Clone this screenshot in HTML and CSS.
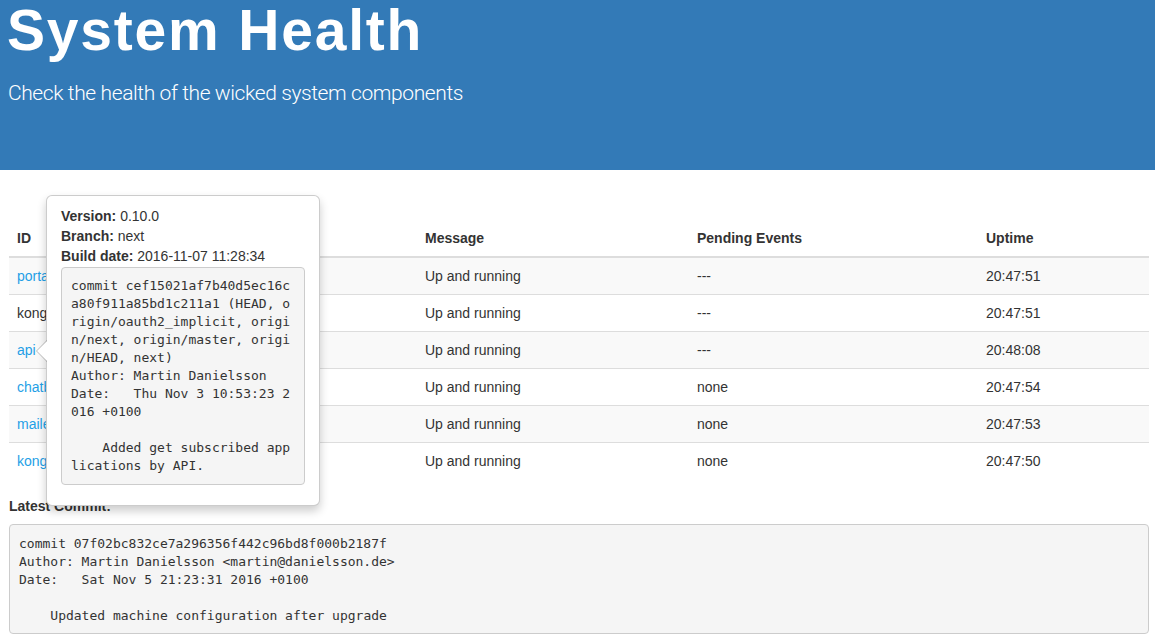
FILE: index.html
```html
<!DOCTYPE html>
<html lang="en">
<head>
<meta charset="utf-8">
<title>System Health</title>
<link rel="stylesheet" href="styles.css">
</head>
<body>
<header class="jumbotron">
  <h1 class="title">System Health</h1>
  <p class="lead">Check the health of the wicked system components</p>
</header>
<main class="container">
  <table class="table">
    <colgroup>
      <col class="c-id"><col class="c-msg"><col class="c-pend"><col class="c-up">
    </colgroup>
    <thead>
      <tr><th>ID</th><th>Message</th><th>Pending Events</th><th>Uptime</th></tr>
    </thead>
    <tbody>
      <tr><td><a class="lnk" href="#">portal</a></td><td>Up and running</td><td>---</td><td>20:47:51</td></tr>
      <tr><td>kong</td><td>Up and running</td><td>---</td><td>20:47:51</td></tr>
      <tr><td><a class="lnk" href="#">api</a></td><td>Up and running</td><td>---</td><td>20:48:08</td></tr>
      <tr><td><a class="lnk" href="#">chatbot</a></td><td>Up and running</td><td>none</td><td>20:47:54</td></tr>
      <tr><td><a class="lnk" href="#">mailer</a></td><td>Up and running</td><td>none</td><td>20:47:53</td></tr>
      <tr><td><a class="lnk" href="#">kong-adapter</a></td><td>Up and running</td><td>none</td><td>20:47:50</td></tr>
    </tbody>
  </table>
  <div class="label">Latest Commit:</div>
  <pre class="code main-code">commit 07f02bc832ce7a296356f442c96bd8f000b2187f
Author: Martin Danielsson &lt;martin@danielsson.de&gt;
Date:   Sat Nov 5 21:23:31 2016 +0100

    Updated machine configuration after upgrade</pre>

  <div class="popover">
    <div class="arrow"></div>
    <div class="popover-content">
      <div><b>Version:</b> 0.10.0</div>
      <div><b>Branch:</b> next</div>
      <div><b>Build date:</b> 2016-11-07 11:28:34</div>
      <pre class="code pop-code">commit cef15021af7b40d5ec16ca80f911a85bd1c211a1 (HEAD, origin/oauth2_implicit, origin/next, origin/master, origin/HEAD, next)
Author: Martin Danielsson
Date:   Thu Nov 3 10:53:23 2016 +0100

    Added get subscribed applications by API.</pre>
    </div>
  </div>
</main>
</body>
</html>
```

FILE: styles.css
```css
html, body {
  margin: 0;
  padding: 0;
  background: #fff;
}
body {
  font-family: "Liberation Sans", Arial, sans-serif;
  font-size: 14px;
  line-height: 20px;
  color: #333;
}
.jumbotron {
  background: #337ab7;
  color: #fff;
  height: 170px;
  box-sizing: border-box;
  padding: 0 8px;
  margin: 0 0 50px 0;
}
.title {
  margin: 0 0 0 -1px;
  font-size: 57px;
  line-height: 60px;
  font-weight: bold;
  letter-spacing: 1.8px;
}
.lead {
  margin: 18px 0 0 0;
  font-family: Roboto, "Liberation Sans", sans-serif;
  font-weight: 300;
  font-size: 21px;
  line-height: 30px;
  letter-spacing: -0.4px;
}
.container {
  position: relative;
  padding: 0 6px 0 9px;
}
.table {
  width: 100%;
  border-collapse: collapse;
  table-layout: fixed;
  margin-bottom: 17px;
}
.c-id { width: 408px; }
.c-msg { width: 272px; }
.c-pend { width: 289px; }
.c-up { width: auto; }
.table th, .table td {
  padding: 8px;
  text-align: left;
  line-height: 20px;
  vertical-align: top;
}
.table th {
  font-weight: bold;
  vertical-align: bottom;
  border-bottom: 2px solid #ddd;
}
.table td {
  border-top: 1px solid #ddd;
}
.table tbody tr:nth-child(odd) {
  background: #f9f9f9;
}
.lnk {
  color: #1f9fe6;
  text-decoration: none;
}
.label {
  font-weight: bold;
  margin-bottom: 8px;
}
.code {
  margin: 0;
  padding: 9px;
  background: #f5f5f5;
  border: 1px solid #ccc;
  border-radius: 4px;
  font-family: "DejaVu Sans Mono", monospace;
  font-size: 13px;
  line-height: 18px;
  color: #333;
  white-space: pre-wrap;
  word-break: break-all;
}
.main-code {
  padding: 10px 9px 8px 9px;
}
.popover {
  position: absolute;
  left: 46px;
  top: -25px;
  width: 274px;
  box-sizing: border-box;
  background: #fff;
  border: 1px solid rgba(0, 0, 0, 0.2);
  border-radius: 6px;
  box-shadow: 0 5px 10px rgba(0, 0, 0, 0.2);
}
.popover-content {
  padding: 10px 14px 10px 14px;
}
.pop-code {
  margin: 1px 0 10px 0;
}
.arrow {
  position: absolute;
  left: -11px;
  top: 50%;
  margin-top: -11px;
  width: 0;
  height: 0;
  border-style: solid;
  border-width: 11px 11px 11px 0;
  border-color: transparent rgba(0, 0, 0, 0.25) transparent transparent;
}
.arrow::after {
  content: "";
  position: absolute;
  left: 1px;
  top: -10px;
  width: 0;
  height: 0;
  border-style: solid;
  border-width: 10px 10px 10px 0;
  border-color: transparent #fff transparent transparent;
}
```
